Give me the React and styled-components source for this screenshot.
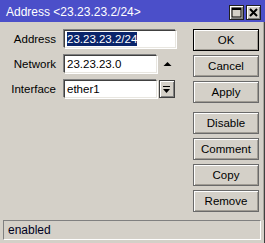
import React from "react";
import styled, { createGlobalStyle } from "styled-components";

const Global = createGlobalStyle`
  html, body { margin: 0; padding: 0; background: #d4d0c8; }
  body { font-family: "Liberation Sans", Arial, sans-serif; font-size: 11px; color: #000; }
`;

const Window = styled.div`
  width: 265px;
  height: 243px;
  box-sizing: border-box;
  display: flex;
  flex-direction: column;
  background: #d4d0c8;
  border-right: 1px solid #404040;
  position: relative;
`;

const TitleBar = styled.div`
  height: 22px;
  flex: none;
  background: #4b4fc9;
  display: flex;
  align-items: center;
  justify-content: space-between;
  padding: 0 4px 0 6px;
  margin-right: -1px;
  color: #fff;
  font-size: 12px;
`;

const TitleText = styled.span`
  padding-top: 1px;
`;

const TitleButtons = styled.div`
  display: flex;
  gap: 2px;
  padding-top: 2px;
`;

const TitleButton = styled.div`
  width: 15px;
  height: 15px;
  box-sizing: border-box;
  background: #d4d0c8;
  border: 1px solid #202020;
  box-shadow: inset 1px 1px 0 #fff, inset -1px -1px 0 #808080;
  display: flex;
  align-items: center;
  justify-content: center;
`;

const Body = styled.div`
  flex: 1;
  display: flex;
  padding: 7px 4px 0 0;
  border-right: 1px solid #a8a49c;
`;

const Form = styled.div`
  flex: 1;
  display: flex;
  flex-direction: column;
  gap: 7px;
  padding-top: 1px;
`;

const Row = styled.div`
  display: flex;
  align-items: center;
  height: 18px;
`;

const Label = styled.div`
  width: 56px;
  text-align: right;
  margin-right: 8px;
  font-size: 11.5px;
`;

const Input = styled.div`
  width: ${p => p.$w}px;
  height: 18px;
  box-sizing: border-box;
  background: #fff;
  border-style: solid;
  border-width: 1px;
  border-color: #404040 #e8e6e0 #e8e6e0 #404040;
  box-shadow: -1px -1px 0 #808080, 1px 1px 0 #fff;
  display: flex;
  align-items: center;
  padding-left: 2px;
  font-size: 11.5px;
`;

const Selected = styled.span`
  background: #0a246a;
  color: #fff;
  line-height: 14px;
`;

const Arrow = styled.div`
  width: 16px;
  height: 18px;
  margin-left: 2px;
  display: flex;
  align-items: center;
  justify-content: center;
`;

const DropButton = styled(Arrow)`
  box-sizing: border-box;
  border: 1px solid #404040;
  box-shadow: inset 1px 1px 0 #fff, inset -1px -1px 0 #808080;
`;

const Buttons = styled.div`
  width: 66px;
  flex: none;
  display: flex;
  flex-direction: column;
  gap: 4px;
`;

const Button = styled.div`
  height: 22px;
  box-sizing: border-box;
  display: flex;
  align-items: center;
  justify-content: center;
  border: 1px solid ${p => (p.$default ? "#000" : "#6a6a6a")};
  box-shadow: inset 1px 1px 0 #fff, inset -1px -1px 0 #a09c94;
  font-size: 11.5px;
  margin-top: ${p => (p.$spaced ? "5px" : "0")};
`;

const Status = styled.div`
  height: 20px;
  flex: none;
  margin: 0 3px 3px 3px;
  box-sizing: border-box;
  border-style: solid;
  border-width: 1px;
  border-color: #808080 #fff #fff #808080;
  display: flex;
  align-items: center;
  padding-left: 4px;
  font-size: 12px;
  color: #000020;
`;

const MaxIcon = () => (
  <svg width="11" height="11" viewBox="0 0 11 11">
    <rect x="1" y="1" width="9" height="9" fill="none" stroke="#000" strokeWidth="1" />
    <rect x="1" y="1" width="9" height="2" fill="#000" />
  </svg>
);

const CloseIcon = () => (
  <svg width="11" height="11" viewBox="0 0 11 11">
    <path d="M2 2 L9 9 M9 2 L2 9" stroke="#000" strokeWidth="2" />
  </svg>
);

const UpIcon = () => (
  <svg width="9" height="6" viewBox="0 0 9 6">
    <path d="M0.5 5 L4.5 1 L8.5 5 Z" fill="#000" />
  </svg>
);

const DropIcon = () => (
  <svg width="8" height="9" viewBox="0 0 8 9">
    <rect x="0" y="1" width="7" height="1" fill="#000" />
    <path d="M0 4 L7 4 L3.5 8 Z" fill="#000" />
  </svg>
);

export default function App() {
  return (
    <>
      <Global />
      <Window>
        <TitleBar>
          <TitleText>Address &lt;23.23.23.2/24&gt;</TitleText>
          <TitleButtons>
            <TitleButton><MaxIcon /></TitleButton>
            <TitleButton><CloseIcon /></TitleButton>
          </TitleButtons>
        </TitleBar>
        <Body>
          <Form>
            <Row>
              <Label>Address</Label>
              <Input $w={112}><Selected>23.23.23.2/24</Selected></Input>
            </Row>
            <Row>
              <Label>Network</Label>
              <Input $w={93}>23.23.23.0</Input>
              <Arrow><UpIcon /></Arrow>
            </Row>
            <Row>
              <Label>Interface</Label>
              <Input $w={93}>ether1</Input>
              <DropButton><DropIcon /></DropButton>
            </Row>
          </Form>
          <Buttons>
            <Button $default>OK</Button>
            <Button>Cancel</Button>
            <Button>Apply</Button>
            <Button $spaced>Disable</Button>
            <Button>Comment</Button>
            <Button>Copy</Button>
            <Button>Remove</Button>
          </Buttons>
        </Body>
        <Status>enabled</Status>
      </Window>
    </>
  );
}
